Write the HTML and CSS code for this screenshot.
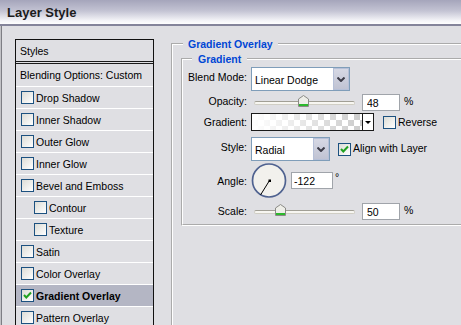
FILE: index.html
```html
<!DOCTYPE html>
<html lang="en">
<head>
    <meta charset="UTF-8">
    <title>Layer Style</title>
    <link rel="stylesheet" href="styles.css">
</head>
<body>

    <div class="titlebar"><span class="title">Layer Style</span></div>

    <div class="window">
        <ul class="styles-list">
            <li class="head">Styles</li>
            <li class="blend">Blending Options: Custom</li>
            <li><span class="check"></span>Drop Shadow</li>
            <li><span class="check"></span>Inner Shadow</li>
            <li><span class="check"></span>Outer Glow</li>
            <li><span class="check"></span>Inner Glow</li>
            <li><span class="check"></span>Bevel and Emboss</li>
            <li class="sub"><span class="check"></span>Contour</li>
            <li class="sub"><span class="check"></span>Texture</li>
            <li><span class="check"></span>Satin</li>
            <li><span class="check"></span>Color Overlay</li>
            <li class="selected"><span class="check"><svg width="11" height="11" viewBox="0 0 11 11"><path d="M2 5 L4.3 7.5 L9 2.5" fill="none" stroke="#21a121" stroke-width="2"/></svg></span>Gradient Overlay</li>
            <li><span class="check"></span>Pattern Overlay</li>
        </ul>

        <fieldset class="group outer">
            <legend>Gradient Overlay</legend>
            <fieldset class="group inner">
                <legend>Gradient</legend>

                <div class="row r-blend">
                    <span class="label up3">Blend Mode:</span>
                    <div class="select blend-select">
                        <span class="value">Linear Dodge</span>
                        <span class="drop"><svg width="8" height="5" viewBox="0 0 8 5"><path d="M0.5 0.5 L4 4 L7.5 0.5" fill="none" stroke="#3c3c48" stroke-width="2"/></svg></span>
                    </div>
                </div>

                <div class="row r-opacity">
                    <span class="label up2">Opacity:</span>
                    <div class="track">
                        <svg class="thumb" style="left: 48%;" width="11" height="12" viewBox="0 0 11 12"><path d="M0.5 4 L5.5 0.5 L10.5 4 L10.5 11.5 L0.5 11.5 Z" fill="#eeeee8" stroke="#8a8a86"/><rect x="1" y="9" width="9" height="2" fill="#2cb82c"/></svg>
                    </div>
                    <input class="num" type="text" value="48">
                    <span class="unit">%</span>
                </div>

                <div class="row r-gradient">
                    <span class="label">Gradient:</span>
                    <div class="gradient-field">
                        <span class="swatch"></span>
                        <span class="arrow"></span>
                    </div>
                    <span class="check reverse"></span>
                    <span class="check-label">Reverse</span>
                </div>

                <div class="row r-style">
                    <span class="label up3">Style:</span>
                    <div class="select style-select">
                        <span class="value">Radial</span>
                        <span class="drop"><svg width="8" height="5" viewBox="0 0 8 5"><path d="M0.5 0.5 L4 4 L7.5 0.5" fill="none" stroke="#3c3c48" stroke-width="2"/></svg></span>
                    </div>
                    <span class="check align"><svg width="11" height="11" viewBox="0 0 11 11"><path d="M2 5 L4.3 7.5 L9 2.5" fill="none" stroke="#21a121" stroke-width="2"/></svg></span>
                    <span class="check-label up1">Align with Layer</span>
                </div>

                <div class="row r-angle">
                    <span class="label">Angle:</span>
                    <svg class="dial" width="36" height="35" viewBox="0 0 36 35">
                        <circle cx="18" cy="17.5" r="16.5" fill="#f2f1ed" stroke="#4f6290" stroke-width="1.7"/>
                        <line x1="18.5" y1="17.5" x2="9.5" y2="32" stroke="#000" stroke-width="1"/>
                        <rect x="17.5" y="16.5" width="2.5" height="2.5" fill="#000"/>
                    </svg>
                    <input class="num angle" type="text" value="-122">
                    <span class="deg">°</span>
                </div>

                <div class="row r-scale">
                    <span class="label up1">Scale:</span>
                    <div class="track">
                        <svg class="thumb" style="left: 25%;" width="11" height="12" viewBox="0 0 11 12"><path d="M0.5 4 L5.5 0.5 L10.5 4 L10.5 11.5 L0.5 11.5 Z" fill="#eeeee8" stroke="#8a8a86"/><rect x="1" y="9" width="9" height="2" fill="#2cb82c"/></svg>
                    </div>
                    <input class="num" type="text" value="50">
                    <span class="unit">%</span>
                </div>
            </fieldset>
        </fieldset>
    </div>

</body>
</html>
```

FILE: styles.css
```css
* {
    margin: 0;
    padding: 0;
    box-sizing: border-box;
}

body {
    font-family: 'Liberation Sans', Arial, sans-serif;
    font-size: 10.5px;
    color: #000;
    background-color: #dfdfe3;
    width: 461px;
    height: 325px;
    overflow: hidden;
}

/* title bar */

.titlebar {
    height: 26px;
    padding: 6px 0 0 7px;
    background: linear-gradient(#a5a5bb, #c3c3d3 45%, #f3f3f7 85%, #ffffff);
    border-bottom: 2px solid #84849a;
}

.title {
    font-size: 13px;
    line-height: 13px;
    font-weight: bold;
    color: #1c1c1c;
}

.window {
    display: flex;
    height: 299px;
    padding-left: 14px;
    border-left: 1px solid #c2c2c6;
    box-shadow: inset 1px 0 0 #7e7e84;
    overflow: hidden;
}

/* styles list */

.styles-list {
    list-style: none;
    flex-shrink: 0;
    width: 139px;
    height: 286px;
    margin-top: 13px;
    border: 1px solid #111;
    border-bottom: none;
    overflow: hidden;
}

.styles-list li {
    display: flex;
    align-items: center;
    height: 22px;
    padding-left: 5px;
    border-bottom: 1px solid #fff;
    white-space: nowrap;
}

.styles-list li.head {
    height: 24px;
    padding-left: 4px;
    border-bottom: 3px double #1a1a1a;
}

.styles-list li.blend {
    height: 23px;
    padding-left: 4px;
}

.styles-list li.sub {
    padding-left: 18px;
}

.styles-list li.selected {
    background-color: #b4b6c4;
    font-weight: bold;
}

.styles-list .check {
    margin-right: 2px;
}

.check {
    display: inline-flex;
    align-items: center;
    justify-content: center;
    flex-shrink: 0;
    width: 13px;
    height: 13px;
    border: 1px solid #1c5180;
    background: linear-gradient(135deg, #dcdcd6, #ffffff);
}

/* group boxes */

.group {
    flex-shrink: 0;
    border: 2px groove #fff;
    border-right: none;
}

.group legend {
    color: #0046d5;
    font-weight: bold;
    line-height: 14px;
}

.outer {
    width: 290px;
    height: 288px;
    margin: 11px 0 0 17px;
    border-bottom: none;
    overflow: hidden;
}

.outer legend {
    margin-left: 10px;
    padding: 0 5px;
}

.inner {
    width: 280px;
    margin: 1px 0 0 8px;
    padding: 0 0 4px 0;
}

.inner legend {
    margin-left: 9px;
    padding: 0 6px;
}

/* rows */

.row {
    display: flex;
    align-items: center;
    white-space: nowrap;
}

.label {
    width: 64px;
    text-align: right;
    margin-right: 4px;
    line-height: 12px;
}

.up1 { margin-bottom: 2px; }
.up2 { margin-bottom: 3px; }
.up3 { margin-bottom: 5px; }

.r-blend { height: 24px; margin-top: 1px; }
.r-opacity { height: 17px; margin-top: 3px; }
.r-gradient { height: 18px; margin-top: 2px; }
.r-style { height: 24px; margin-top: 6px; }
.r-angle { height: 35px; margin-top: 2px; }
.r-scale { height: 17px; margin-top: 5px; }

/* select boxes */

.select {
    display: flex;
    height: 24px;
    border: 1px solid #7f9db9;
    background-color: #fff;
}

.blend-select { width: 99px; }
.style-select { width: 79px; }

.select .value {
    flex: 1;
    padding: 2px 0 0 3px;
    display: flex;
    align-items: center;
}

.select .drop {
    display: flex;
    align-items: center;
    justify-content: center;
    width: 16px;
    border: 1px solid #b6c0d8;
    background: linear-gradient(#d6d8e4, #c0c3d3);
}

/* sliders */

.track {
    position: relative;
    width: 101px;
    height: 4px;
    margin: 1px 0 0 3px;
    border: 1px solid #d0cec4;
    border-top-color: #a19f95;
    border-radius: 2px;
    background-color: #f7f6f1;
}

.thumb {
    position: absolute;
    top: -7px;
    margin-left: -5px;
}

.num {
    width: 38px;
    height: 17px;
    margin-left: 7px;
    padding: 1px 0 0 4px;
    border: 1px solid #a0a4aa;
    background-color: #fff;
    font: inherit;
    color: #000;
    outline: none;
}

.unit {
    margin: 0 0 3px 4px;
}

/* gradient swatch */

.gradient-field {
    display: flex;
    width: 123px;
    height: 18px;
    border: 1px solid #1a1a1a;
}

.swatch {
    flex: 1;
    background-image: linear-gradient(to right, #fff, rgba(255, 255, 255, 0)),
        conic-gradient(#cccccc 25%, #fff 0 50%, #cccccc 0 75%, #fff 0);
    background-size: 100% 100%, 12px 12px;
}

.arrow {
    position: relative;
    width: 11px;
    border-left: 1px solid #1a1a1a;
    background-color: #fff;
}

.arrow::after {
    content: '';
    position: absolute;
    left: 2px;
    top: 7px;
    border-left: 3px solid transparent;
    border-right: 3px solid transparent;
    border-top: 3px solid #000;
}

.reverse {
    margin-left: 9px;
}

.align {
    margin-left: 8px;
}

.check-label {
    margin-left: 2px;
}

/* angle */

.dial {
    flex-shrink: 0;
}

.num.angle {
    width: 42px;
    margin-left: 4px;
    padding-left: 2px;
}

.deg {
    margin: 0 0 8px 2px;
}
```
